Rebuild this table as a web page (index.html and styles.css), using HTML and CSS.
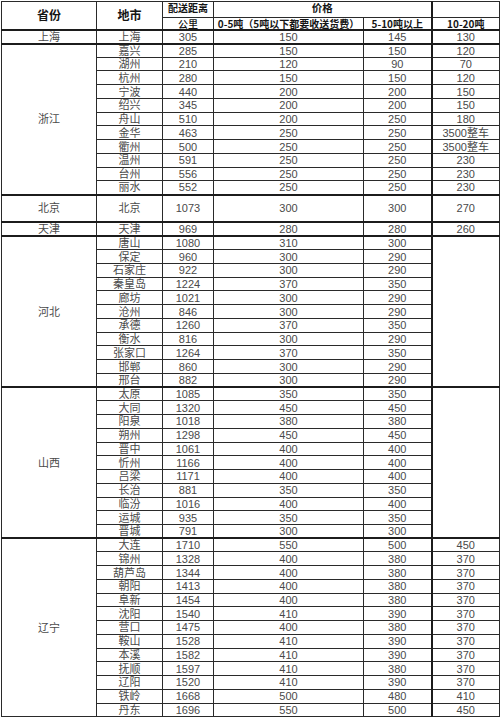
FILE: index.html
```html
<!DOCTYPE html>
<html lang="zh-CN">
<head>
<meta charset="utf-8">
<title>配送价格表</title>
<link rel="stylesheet" href="styles.css">
</head>
<body>
<table class="sheet">
  <colgroup>
    <col class="c-prov"><col class="c-city"><col class="c-km"><col class="c-p1"><col class="c-p2"><col class="c-p3">
  </colgroup>
  <thead>
    <tr class="h1">
      <th rowspan="2" class="big">省份</th>
      <th rowspan="2" class="big">地市</th>
      <th class="dist">配送距离</th>
      <th colspan="2" class="price">价格</th>
      <th class="blank thick-l"></th>
    </tr>
    <tr class="h2">
      <th class="km">公里</th>
      <th>0-5吨（5吨以下都要收送货费）</th>
      <th>5-10吨以上</th>
      <th class="thick-l">10-20吨</th>
    </tr>
  </thead>
  <tbody>
    <tr class="grp"><td>上海</td><td>上海</td><td>305</td><td>150</td><td>145</td><td class="thick-l">130</td></tr>

    <tr class="grp"><td rowspan="11">浙江</td><td>嘉兴</td><td>285</td><td>150</td><td>150</td><td class="thick-l">120</td></tr>
    <tr><td>湖州</td><td>210</td><td>120</td><td>90</td><td class="thick-l">70</td></tr>
    <tr><td>杭州</td><td>280</td><td>150</td><td>150</td><td class="thick-l">120</td></tr>
    <tr><td>宁波</td><td>440</td><td>200</td><td>200</td><td class="thick-l">150</td></tr>
    <tr><td>绍兴</td><td>345</td><td>200</td><td>200</td><td class="thick-l">150</td></tr>
    <tr><td>舟山</td><td>510</td><td>200</td><td>250</td><td class="thick-l">180</td></tr>
    <tr><td>金华</td><td>463</td><td>250</td><td>250</td><td class="thick-l">3500整车</td></tr>
    <tr><td>衢州</td><td>500</td><td>250</td><td>250</td><td class="thick-l">3500整车</td></tr>
    <tr><td>温州</td><td>591</td><td>250</td><td>250</td><td class="thick-l">230</td></tr>
    <tr><td>台州</td><td>556</td><td>250</td><td>250</td><td class="thick-l">230</td></tr>
    <tr><td>丽水</td><td>552</td><td>250</td><td>250</td><td class="thick-l">230</td></tr>

    <tr class="grp tall"><td>北京</td><td>北京</td><td>1073</td><td>300</td><td>300</td><td class="thick-l">270</td></tr>

    <tr class="grp"><td>天津</td><td>天津</td><td>969</td><td>280</td><td>280</td><td class="thick-l">260</td></tr>

    <tr class="grp"><td rowspan="11">河北</td><td>唐山</td><td>1080</td><td>310</td><td>300</td><td rowspan="11" class="thick-l"></td></tr>
    <tr><td>保定</td><td>960</td><td>300</td><td>290</td></tr>
    <tr><td>石家庄</td><td>922</td><td>300</td><td>290</td></tr>
    <tr><td>秦皇岛</td><td>1224</td><td>370</td><td>350</td></tr>
    <tr><td>廊坊</td><td>1021</td><td>300</td><td>290</td></tr>
    <tr><td>沧州</td><td>846</td><td>300</td><td>290</td></tr>
    <tr><td>承德</td><td>1260</td><td>370</td><td>350</td></tr>
    <tr><td>衡水</td><td>816</td><td>300</td><td>290</td></tr>
    <tr><td>张家口</td><td>1264</td><td>370</td><td>350</td></tr>
    <tr><td>邯郸</td><td>860</td><td>300</td><td>290</td></tr>
    <tr><td>邢台</td><td>882</td><td>300</td><td>290</td></tr>

    <tr class="grp"><td rowspan="11">山西</td><td>太原</td><td>1085</td><td>350</td><td>350</td><td rowspan="11" class="thick-l"></td></tr>
    <tr><td>大同</td><td>1320</td><td>450</td><td>450</td></tr>
    <tr><td>阳泉</td><td>1018</td><td>380</td><td>380</td></tr>
    <tr><td>朔州</td><td>1298</td><td>450</td><td>450</td></tr>
    <tr><td>晋中</td><td>1061</td><td>400</td><td>400</td></tr>
    <tr><td>忻州</td><td>1166</td><td>400</td><td>400</td></tr>
    <tr><td>吕梁</td><td>1171</td><td>400</td><td>400</td></tr>
    <tr><td>长治</td><td>881</td><td>350</td><td>350</td></tr>
    <tr><td>临汾</td><td>1016</td><td>400</td><td>400</td></tr>
    <tr><td>运城</td><td>935</td><td>350</td><td>350</td></tr>
    <tr><td>晋城</td><td>791</td><td>300</td><td>300</td></tr>

    <tr class="grp"><td rowspan="13">辽宁</td><td>大连</td><td>1710</td><td>550</td><td>500</td><td class="thick-l">450</td></tr>
    <tr><td>锦州</td><td>1328</td><td>400</td><td>380</td><td class="thick-l">370</td></tr>
    <tr><td>葫芦岛</td><td>1344</td><td>400</td><td>380</td><td class="thick-l">370</td></tr>
    <tr><td>朝阳</td><td>1413</td><td>400</td><td>380</td><td class="thick-l">370</td></tr>
    <tr><td>阜新</td><td>1454</td><td>400</td><td>380</td><td class="thick-l">370</td></tr>
    <tr><td>沈阳</td><td>1540</td><td>410</td><td>390</td><td class="thick-l">370</td></tr>
    <tr><td>营口</td><td>1475</td><td>400</td><td>380</td><td class="thick-l">370</td></tr>
    <tr><td>鞍山</td><td>1528</td><td>410</td><td>390</td><td class="thick-l">370</td></tr>
    <tr><td>本溪</td><td>1582</td><td>410</td><td>390</td><td class="thick-l">370</td></tr>
    <tr><td>抚顺</td><td>1597</td><td>410</td><td>380</td><td class="thick-l">370</td></tr>
    <tr><td>辽阳</td><td>1520</td><td>410</td><td>390</td><td class="thick-l">370</td></tr>
    <tr><td>铁岭</td><td>1668</td><td>500</td><td>480</td><td class="thick-l">410</td></tr>
    <tr><td>丹东</td><td>1696</td><td>550</td><td>500</td><td class="thick-l">450</td></tr>
  </tbody>
</table>
</body>
</html>
```
FILE: styles.css
```css
html, body {
  margin: 0;
  padding: 0;
  background: #ffffff;
}

.sheet {
  margin: 1px 0 0 1px;
  width: 498px;
  table-layout: fixed;
  border-collapse: collapse;
  font-family: "Liberation Sans", "Noto Sans CJK SC", sans-serif;
  font-size: 11px;
  color: #4a4a4a;
}

.c-prov { width: 95px; }
.c-city { width: 66px; }
.c-km   { width: 51px; }
.c-p1   { width: 150px; }
.c-p2   { width: 68px; }
.c-p3   { width: 68px; }

.sheet th,
.sheet td {
  border: 1px solid #2a2a2a;
  padding: 0;
  text-align: center;
  vertical-align: middle;
  white-space: nowrap;
  overflow: visible;
  line-height: 12px;
}

.sheet th {
  font-family: "Noto Sans CJK SC", "Liberation Sans", sans-serif;
  font-weight: 700;
  color: #151515;
  font-size: 10px;
  line-height: 10px;
}

.sheet th.big {
  font-size: 12px;
  line-height: 12px;
}

.sheet th.dist,
.sheet th.price {
  font-size: 10px;
  line-height: 10px;
  vertical-align: top;
  padding-top: 1px;
}

.sheet th.price {
  font-size: 10.5px;
}

.sheet tr.h2 th {
  vertical-align: bottom;
}

.sheet th.km {
  font-size: 10px;
  font-weight: 500;
}

.h1 { height: 16px; }
.h2 { height: 12px; }

.sheet tbody tr { height: 13.74px; }
.sheet tbody tr.tall { height: 27.48px; }

.sheet tbody tr.grp td {
  border-top: 2px solid #1c1c1c;
}

.sheet .thick-l {
  border-left: 2px solid #1c1c1c;
}

.sheet thead tr.h2 th {
  border-bottom: 1px solid #1c1c1c;
}
```
